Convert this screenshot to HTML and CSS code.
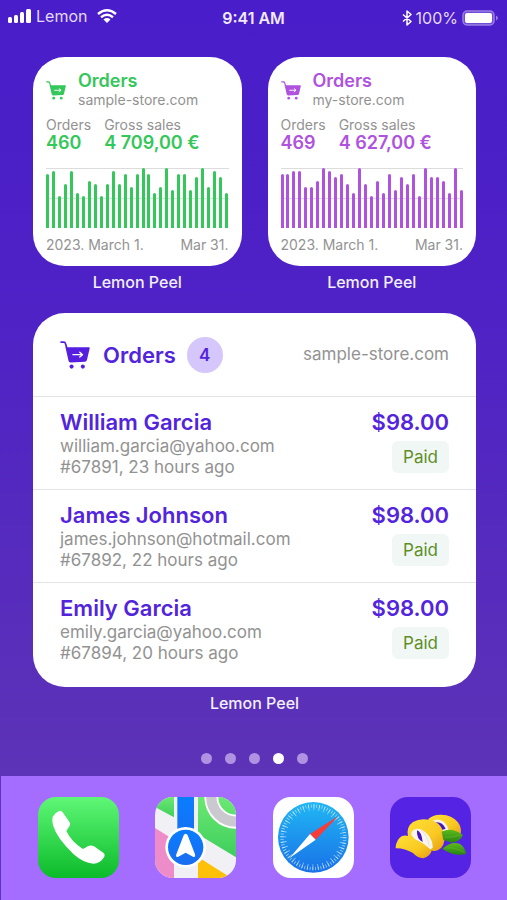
FILE: index.html
```html
<!DOCTYPE html>
<html lang="en">
<head>
<meta charset="utf-8">
<meta name="viewport" content="width=device-width, initial-scale=1">
<title>Home screen</title>
<link rel="stylesheet" href="styles.css">
</head>
<body>
<svg class="defs" aria-hidden="true">
  <symbol id="cart" viewBox="0 0 88 82">
    <path d="M3 3h8q4 0 5 4l5 17" fill="none" stroke="currentColor" stroke-width="5" stroke-linecap="round"/>
    <path d="M16 18h69q3 0 2 4l-8 34q-1 5-6 5l-42 2q-5 0-6-5z" fill="currentColor"/>
    <path d="M38 40h27M58 33l8 7-8 7" fill="none" stroke="#fff" stroke-width="4" stroke-linecap="round" stroke-linejoin="round"/>
    <circle cx="34" cy="75" r="6" fill="currentColor"/><circle cx="67" cy="75" r="6" fill="currentColor"/>
  </symbol>
</svg>

<header class="status">
  <div class="status-side">
    <svg class="signal" viewBox="0 0 23 14" aria-hidden="true"><g fill="#fff"><rect x="0" y="8" width="4" height="6" rx="1.5"/><rect x="6" y="6" width="4" height="8" rx="1.5"/><rect x="12" y="3" width="4" height="11" rx="1.5"/><rect x="18" y="0" width="5" height="14" rx="1.5"/></g></svg>
    <span>Lemon</span>
    <svg class="wifi" viewBox="0 0 20 14" aria-hidden="true"><g fill="none" stroke="#fff" stroke-width="2.4"><path d="M1 5Q10-2.500 19 5"/><path d="M4 8.200Q10 3.400 16 8.200"/></g><path d="M6.500 10.500Q10 7.600 13.500 10.500L10 14z" fill="#fff"/></svg>
  </div>
  <time class="clock">9:41 AM</time>
  <div class="status-side status-right">
    <svg class="bluetooth" viewBox="0 0 10 16" aria-hidden="true"><path d="M1 4.500l8 7-4 3.500V1l4 3.500-8 7" fill="none" stroke="#fff" stroke-width="1.500" stroke-linejoin="round"/></svg>
    <span>100%</span>
    <svg class="battery" viewBox="0 0 37 16" aria-hidden="true"><rect x="1" y="1" width="31" height="14" rx="4" fill="#6f4bd8" stroke="#9a7de4" stroke-width="1.500"/><rect x="3" y="3" width="27" height="10" rx="2" fill="#fff"/><path d="M34 5.500q4 2.500 0 5z" fill="#9a7de4"/></svg>
  </div>
</header>

<main class="home">
  <div class="small-widgets">
    <figure class="widget">
      <section class="card stats green">
        <header class="stats-head">
          <svg class="cart-small" aria-hidden="true"><use href="#cart"/></svg>
          <div><h2>Orders</h2><p>sample-store.com</p></div>
        </header>
        <dl class="totals">
          <div><dt>Orders</dt><dd>460</dd></div>
          <div><dt>Gross sales</dt><dd>4 709,00 €</dd></div>
        </dl>
        <div class="chart" role="img" aria-label="Orders per day">
          <i style="--v:17"></i><i style="--v:18"></i><i style="--v:10"></i><i style="--v:14"></i><i style="--v:18"></i><i style="--v:11"></i><i style="--v:10"></i><i style="--v:15"></i><i style="--v:14"></i><i style="--v:10"></i><i style="--v:14"></i><i style="--v:18"></i><i style="--v:14"></i><i style="--v:17"></i><i style="--v:13"></i><i style="--v:17"></i><i style="--v:19"></i><i style="--v:17"></i><i style="--v:11"></i><i style="--v:13"></i><i style="--v:19"></i><i style="--v:12"></i><i style="--v:17"></i><i style="--v:17"></i><i style="--v:12"></i><i style="--v:16"></i><i style="--v:19"></i><i style="--v:13"></i><i style="--v:18"></i><i style="--v:16"></i><i style="--v:11"></i>
        </div>
        <div class="dates"><span>2023. March 1.</span><span>Mar 31.</span></div>
      </section>
      <figcaption>Lemon Peel</figcaption>
    </figure>
    <figure class="widget">
      <section class="card stats purple">
        <header class="stats-head">
          <svg class="cart-small" aria-hidden="true"><use href="#cart"/></svg>
          <div><h2>Orders</h2><p>my-store.com</p></div>
        </header>
        <dl class="totals">
          <div><dt>Orders</dt><dd>469</dd></div>
          <div><dt>Gross sales</dt><dd>4 627,00 €</dd></div>
        </dl>
        <div class="chart" role="img" aria-label="Orders per day">
          <i style="--v:17"></i><i style="--v:17"></i><i style="--v:18"></i><i style="--v:18"></i><i style="--v:13"></i><i style="--v:13"></i><i style="--v:15"></i><i style="--v:19"></i><i style="--v:18"></i><i style="--v:16"></i><i style="--v:17"></i><i style="--v:14"></i><i style="--v:11"></i><i style="--v:19"></i><i style="--v:14"></i><i style="--v:10"></i><i style="--v:15"></i><i style="--v:11"></i><i style="--v:17"></i><i style="--v:12"></i><i style="--v:16"></i><i style="--v:14"></i><i style="--v:17"></i><i style="--v:10"></i><i style="--v:19"></i><i style="--v:16"></i><i style="--v:16"></i><i style="--v:15"></i><i style="--v:11"></i><i style="--v:19"></i><i style="--v:12"></i>
        </div>
        <div class="dates"><span>2023. March 1.</span><span>Mar 31.</span></div>
      </section>
      <figcaption>Lemon Peel</figcaption>
    </figure>
  </div>

  <figure class="widget">
    <section class="card orders">
      <header class="orders-head">
        <svg class="cart-large" aria-hidden="true"><use href="#cart"/></svg>
        <h2>Orders</h2>
        <span class="count">4</span>
        <span class="store">sample-store.com</span>
      </header>
      <ul class="order-list">
        <li class="order">
          <div class="customer"><h3>William Garcia</h3><p>william.garcia@yahoo.com</p><p>#67891, 23 hours ago</p></div>
          <div class="payment"><strong>$98.00</strong><span class="paid">Paid</span></div>
        </li>
        <li class="order">
          <div class="customer"><h3>James Johnson</h3><p>james.johnson@hotmail.com</p><p>#67892, 22 hours ago</p></div>
          <div class="payment"><strong>$98.00</strong><span class="paid">Paid</span></div>
        </li>
        <li class="order">
          <div class="customer"><h3>Emily Garcia</h3><p>emily.garcia@yahoo.com</p><p>#67894, 20 hours ago</p></div>
          <div class="payment"><strong>$98.00</strong><span class="paid">Paid</span></div>
        </li>
      </ul>
    </section>
    <figcaption>Lemon Peel</figcaption>
  </figure>
</main>

<div class="pages" aria-hidden="true"><i></i><i></i><i></i><i class="current"></i><i></i></div>

<nav class="dock">
  <a href="#phone" aria-label="Phone">
    <svg viewBox="39 37 243 243">
      <defs><linearGradient id="phone-bg" x1="0" y1="0" x2="0" y2="1"><stop offset="0" stop-color="#5ff777"/><stop offset="1" stop-color="#0bbb29"/></linearGradient></defs>
      <rect x="39" y="37" width="243" height="243" rx="54" fill="url(#phone-bg)"/>
      <path d="M84 95Q90 84 103 79Q109 77 113 83L134 113Q137 118 134 123L124 139Q139 171 174 193L190 184Q198 180 207 185L236 205Q241 209 238 216Q226 236 205 237Q175 235 145 208Q95 160 84 122Q80 104 84 95z" fill="#fff"/>
    </svg>
  </a>
  <a href="#maps" aria-label="Maps">
    <svg viewBox="30 37 243 243">
      <defs>
        <clipPath id="map-clip"><rect x="30" y="37" width="243" height="243" rx="54"/></clipPath>
        <linearGradient id="map-green" x1="0" y1="0" x2="0" y2="1"><stop offset="0" stop-color="#6be873"/><stop offset="1" stop-color="#3fce5c"/></linearGradient>
        <linearGradient id="map-blue" x1="0" y1="0" x2="0" y2="1"><stop offset="0" stop-color="#0a7dff"/><stop offset="1" stop-color="#1a6cf0"/></linearGradient>
      </defs>
      <g clip-path="url(#map-clip)">
        <path d="M30 37h243v243H30z" fill="#f1f0f5"/>
        <path d="M30 37h57v61L30 67z" fill="url(#map-green)"/>
        <path d="M30 130l57 35v115H30z" fill="#ee8cca"/>
        <path d="M159 37h114v181l-114-69z" fill="url(#map-green)"/>
        <path d="M159 217l100 63H159z" fill="#ffc107"/>
        <circle cx="273" cy="37" r="74" fill="none" stroke="#fff" stroke-width="42"/>
        <circle cx="273" cy="37" r="74" fill="none" stroke="#cac9cf" stroke-width="31"/>
        <path d="M97 37h50v150H97z" fill="url(#map-blue)"/>
        <circle cx="122" cy="188" r="61" fill="#fff"/>
        <circle cx="122" cy="188" r="53" fill="url(#map-blue)"/>
        <path d="M122 147q4 0 6 5l22 57q3 10-6 7l-22-12-22 12q-9 3-6-7l22-57q2-5 6-5z" fill="#fff"/>
      </g>
    </svg>
  </a>
  <a href="#safari" aria-label="Safari">
    <svg viewBox="39 37 243 243">
      <defs><linearGradient id="compass" x1="0" y1="0" x2="0" y2="1"><stop offset="0" stop-color="#20b7f3"/><stop offset="1" stop-color="#1971e8"/></linearGradient></defs>
      <rect x="39" y="37" width="243" height="243" rx="54" fill="#fff"/>
      <circle cx="160" cy="158" r="106" fill="url(#compass)"/>
      <circle cx="160" cy="158" r="90" fill="none" stroke="#cdeaff" stroke-width="18" stroke-dasharray="2.500 13.208" opacity=".7"/>
      <circle cx="160" cy="158" r="94" fill="none" stroke="#cdeaff" stroke-width="10" stroke-dasharray="2.500 5.703" opacity=".7"/>
      <path d="M234 95L167 165L150 148z" fill="#fb3b35"/>
      <path d="M88 221L150 148L167 165z" fill="#fff"/>
    </svg>
  </a>
  <a href="#lemon-peel" aria-label="Lemon Peel">
    <svg viewBox="30 37 243 243">
      <defs>
        <linearGradient id="peel" x1="0" y1="0" x2="1" y2="1"><stop offset="0" stop-color="#ffdf35"/><stop offset=".6" stop-color="#f9c922"/><stop offset="1" stop-color="#e79d13"/></linearGradient>
        <linearGradient id="leaf" x1="0" y1="0" x2="0" y2="1"><stop offset="0" stop-color="#5dbb19"/><stop offset="1" stop-color="#278315"/></linearGradient>
      </defs>
      <rect x="30" y="37" width="243" height="243" rx="54" fill="#5523e3"/>
      <path d="M144 104Q158 89 184 90Q216 91 233 112Q246 128 242 151L200 158L170 120z" fill="url(#peel)"/>
      <path d="M156 109Q172 100 188 109Q202 119 206 137L190 141L172 125z" fill="#f8f2ec"/>
      <path d="M167 113Q186 110 197 132L186 136Q181 124 167 113z" fill="#4515bf"/>
      <path d="M84 154Q78 127 99 112Q126 97 163 110Q189 123 193 155Q196 187 173 197Q158 203 143 193L110 180z" fill="url(#peel)"/>
      <path d="M94 151Q92 134 112 132Q126 132 142 148Q159 168 158 188Q152 199 143 193L112 172Z" fill="#f9f5ee"/>
      <path d="M111 137Q125 141 128 172Q109 163 111 137z" fill="#4616bf"/>
      <path d="M124 137Q142 153 148 184" fill="none" stroke="#ddd4cc" stroke-width="2"/>
      <path d="M185 141Q213 125 249 151Q239 173 215 174L190 165z" fill="url(#leaf)"/>
      <path d="M187 192Q213 169 239 177Q254 186 259 208Q219 216 187 192z" fill="url(#leaf)"/>
      <path d="M196 190Q224 186 251 203M194 158Q216 159 240 151" fill="none" stroke="#6fc02f" stroke-width="1.500"/>
      <path d="M47 188Q49 164 66 154Q85 149 102 162Q132 174 155 198Q151 214 130 221Q111 219 99 205Q73 190 47 191z" fill="url(#peel)"/>
    </svg>
  </a>
</nav>
</body>
</html>
```

FILE: styles.css
```css
* { box-sizing: border-box; }

body {
  margin: 0;
  min-height: 100vh;
  display: flex;
  flex-direction: column;
  background: linear-gradient(#491dc9 0, #4e22c5 35%, #5e34b6 90%);
  color: #fff;
  font-family: Inter, "Liberation Sans", sans-serif;
}

h2, h3, p, dl, dd, ul, figure { margin: 0; padding: 0; }
ul { list-style: none; }
svg { display: block; flex: none; }
.defs { position: absolute; width: 0; height: 0; }

/* Status bar */
.status {
  display: grid;
  grid-template-columns: 1fr auto 1fr;
  align-items: center;
  height: 35px;
  padding: 0 8px;
  font-size: 16px;
  line-height: 20px;
}
.status-side { display: flex; align-items: center; gap: 5px; color: #e4dafa; padding-bottom: 3px; }
.status-right { justify-content: flex-end; gap: 4px; padding-bottom: 0; }
.signal { width: 23px; height: 14px; }
.wifi { width: 20px; height: 14px; margin-left: 5px; }
.bluetooth { width: 10px; height: 16px; }
.battery { width: 37px; height: 16px; }
.clock { font-weight: 600; color: #f0eafc; }

/* Widgets */
.home {
  display: flex;
  flex-direction: column;
  gap: 22px;
  padding: 22px 31px 0 33px;
}
.small-widgets { display: grid; grid-template-columns: 1fr 1fr; gap: 26px; }
.card { background: #fff; border-radius: 32px; overflow: hidden; }
figcaption {
  margin-top: 7px;
  text-align: center;
  font-size: 16px;
  line-height: 18px;
  font-weight: 500;
  color: #f3effd;
}

.green { --accent: #34c759; --grid: #c5f0cf; }
.purple { --accent: #af52de; --grid: #e9cff6; }
.stats { padding: 14px 13px 12px; color: #929292; font-size: 14px; line-height: 18px; }
.stats-head { display: flex; align-items: center; gap: 12px; }
.stats-head h2 { font-size: 18px; line-height: 20px; font-weight: 600; color: var(--accent); }
.cart-small { width: 20px; height: 19px; color: var(--accent); }
.totals { display: flex; gap: 13px; margin-top: 7px; }
.totals dd { font-size: 18px; font-weight: 600; color: var(--accent); }
.chart {
  display: flex;
  justify-content: space-between;
  align-items: flex-end;
  height: 60px;
  margin-top: 16px;
  background: linear-gradient(#dcdcdc, #dcdcdc) 0 0 / 100% 1px no-repeat,
    linear-gradient(var(--grid), var(--grid)) 0 50% / 100% 1px no-repeat;
}
.chart i {
  width: 3px;
  height: calc(var(--v) / 19 * 100%);
  border-radius: 2px 2px 0 0;
  background: var(--accent);
}
.dates { display: flex; justify-content: space-between; margin-top: 8px; }

/* Order list */
.orders { color: #929292; font-size: 17px; line-height: 21px; }
.orders-head {
  display: flex;
  align-items: center;
  height: 83px;
  padding: 0 27px;
}
.cart-large { width: 30px; height: 28px; color: #561fe0; }
.orders-head h2 { margin: 0 11px 0 13px; font-size: 22px; line-height: 28px; font-weight: 600; color: #5224dc; }
.count {
  width: 36px;
  height: 36px;
  border-radius: 50%;
  background: #d5c6fb;
  color: #5224dc;
  font-weight: 600;
  line-height: 36px;
  text-align: center;
}
.store { margin-left: auto; }
.order {
  display: flex;
  justify-content: space-between;
  padding: 11px 27px;
  border-top: 1px solid #e3e3e6;
}
.order:last-child { padding-bottom: 23px; }
.order h3, .order strong { font-size: 22px; line-height: 28px; font-weight: 600; color: #5224dc; }
.payment { display: flex; flex-direction: column; align-items: flex-end; gap: 5px; }
.paid {
  padding: 0 11px;
  border-radius: 6px;
  background: #f1f7f5;
  color: #5e8f26;
  line-height: 32px;
}

.pages { display: flex; justify-content: center; gap: 13px; margin: auto 0 12px; padding: 24px 31px 0 33px; }
.pages i { width: 11px; height: 11px; border-radius: 50%; background: #b092e2; }
.pages .current { background: #fff; }

/* Dock */
.dock {
  display: flex;
  justify-content: space-between;
  margin-left: 1px;
  padding: 21px 36px 22px 37px;
  background: #a46dff;
}
.dock a, .dock svg { display: block; width: 81px; height: 81px; }
```
